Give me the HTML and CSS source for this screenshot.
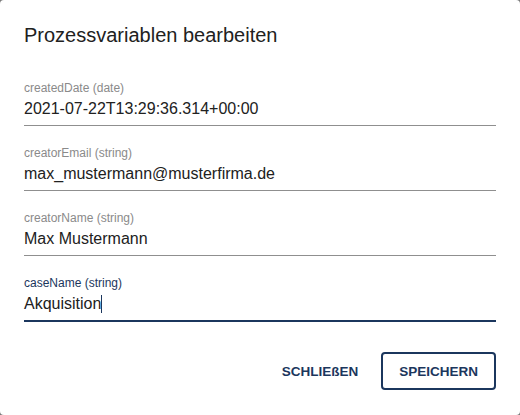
FILE: index.html
```html
<!DOCTYPE html>
<html lang="de">
<head>
    <meta charset="UTF-8">
    <meta name="viewport" content="width=device-width, initial-scale=1.0">
    <title>Prozessvariablen bearbeiten</title>
    <link rel="stylesheet" href="styles.css">
</head>
<body>
    <div class="dialog">
        <h2 class="dialog-title">Prozessvariablen bearbeiten</h2>

        <div class="fields">
            <div class="field">
                <label class="field-label">createdDate (date)</label>
                <div class="field-value">2021-07-22T13:29:36.314+00:00</div>
            </div>
            <div class="field">
                <label class="field-label">creatorEmail (string)</label>
                <div class="field-value">max_mustermann@musterfirma.de</div>
            </div>
            <div class="field">
                <label class="field-label">creatorName (string)</label>
                <div class="field-value">Max Mustermann</div>
            </div>
            <div class="field focused">
                <label class="field-label">caseName (string)</label>
                <div class="field-value">Akquisition<span class="caret"></span></div>
            </div>
        </div>

        <div class="actions">
            <button class="btn btn-text">SCHLIEßEN</button>
            <button class="btn btn-outline">SPEICHERN</button>
        </div>
    </div>
</body>
</html>
```

FILE: styles.css
```css
html, body {
    margin: 0;
    height: 100%;
}
body {
    background: #7a7a7a;
    font-family: "Liberation Sans", Arial, sans-serif;
    color: #212121;
}
.dialog {
    box-sizing: border-box;
    height: 100%;
    background: #fff;
    border-radius: 4px;
    padding: 23px 24px 25px;
    display: flex;
    flex-direction: column;
}
.dialog-title {
    margin: 0;
    font-size: 20px;
    line-height: 24px;
    font-weight: normal;
}
.fields {
    margin-top: 34px;
    display: flex;
    flex-direction: column;
    gap: 20px;
}
.field {
    display: flex;
    flex-direction: column;
    gap: 4px;
    border-bottom: 1px solid #8f8f8f;
}
.field-label {
    font-size: 12px;
    line-height: 14px;
    color: #8a8a8a;
}
.field-value {
    font-size: 16px;
    line-height: 20px;
    padding-bottom: 6px;
}
.field.focused {
    border-bottom: 2px solid #1b365d;
    margin-bottom: -1px;
}
.field.focused .field-label {
    color: #1b365d;
}
.caret {
    display: inline-block;
    width: 1px;
    height: 18px;
    background: #1b365d;
    vertical-align: -4px;
}
.actions {
    margin-top: auto;
    display: flex;
    justify-content: flex-end;
    gap: 5px;
}
.btn {
    font-family: "Liberation Sans", Arial, sans-serif;
    font-size: 13.5px;
    font-weight: bold;
    color: #1b365d;
    background: #fff;
    height: 38px;
    padding: 0 16px;
    border: 2px solid transparent;
    border-radius: 4px;
    cursor: pointer;
}
.btn-outline {
    border-color: #1b365d;
}
```
